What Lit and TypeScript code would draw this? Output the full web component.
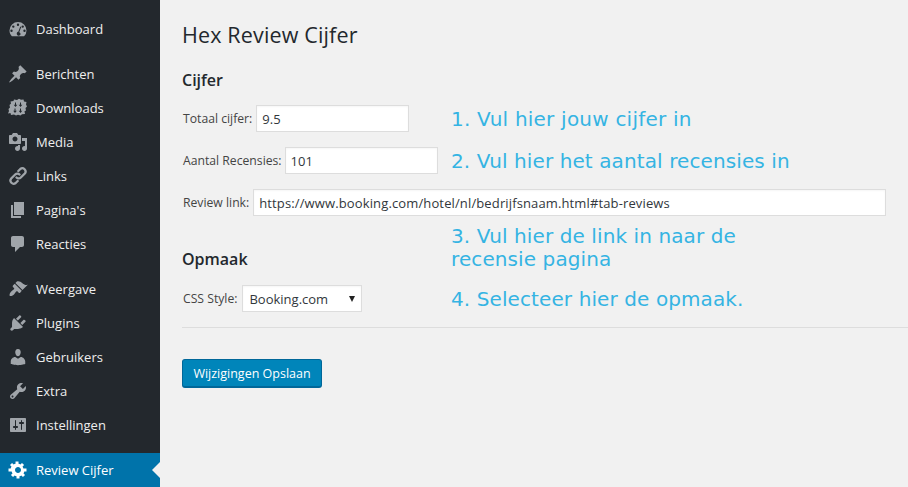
import { LitElement, html, css, svg } from "lit";
import { customElement } from "lit/decorators.js";

const icons: Record<string, unknown> = {
  dashboard: svg`<path fill-rule="evenodd" d="M10 3a8.500 8.500 0 0 0-8.500 8.500c0 2.300.9 4.300 2.400 5.800h12.200a8.300 8.300 0 0 0 2.400-5.800A8.500 8.500 0 0 0 10 3zM10 4.600a1.200 1.200 0 1 1 0 2.400 1.200 1.200 0 0 1 0-2.400zM5.300 6.400a1.200 1.200 0 1 1 0 2.400 1.200 1.200 0 0 1 0-2.400zM14.700 6.400a1.200 1.200 0 1 1 0 2.400 1.200 1.200 0 0 1 0-2.400zM3.500 10.500a1.200 1.200 0 1 1 0 2.400 1.200 1.200 0 0 1 0-2.400zM16.500 10.500a1.200 1.200 0 1 1 0 2.400 1.200 1.200 0 0 1 0-2.400zM12.300 7.500l.9.400-2 5.300a1.800 1.800 0 1 1-2.100 2.500 1.800 1.800 0 0 1 1.200-2.900z"/>`,
  pin: svg`<path d="M10.440 3.020l1.820-1.820 6.360 6.350-1.830 1.820c-1.050-.68-2.480-.57-3.410.36l-.75.75c-.92.93-1.040 2.350-.35 3.410l-1.830 1.820-2.410-2.410-2.800 2.790c-.42.42-3.380 2.710-3.800 2.290s1.860-3.390 2.280-3.810l2.790-2.790L4.100 9.360l1.830-1.820c1.050.69 2.480.57 3.400-.36l.75-.75c.93-.92 1.050-2.350.36-3.410z"/>`,
  downloads: svg`<path fill-rule="evenodd" d="M2.500 3.500l3-.5L6 1.500l3 .5 2-1.200 2 1 2.500-.3.500 2 2.500.5-.5 2.500 1 2-1.500 1.500.5 2.500-1.500.8.500 2.700-3 .3-1.500 1.200-2.500-.8-2 .8-2-1-3 .5-.5-2L0 15.500l1-2.500-.5-2L2 9.500 1.500 7 3 5.500zM7 4.500v2.300H5.700L7.500 9l1.800-2.200H8V4.500zM12 4.500v2.300h-1.300L12.500 9l1.800-2.200H13V4.500zM6.500 10.500v2.300H5.200L7 15l1.800-2.200H7.500v-2.300zM12 10.500v2.300h-1.300l1.800 2.200 1.800-2.200H13v-2.300z"/>`,
  media: svg`<path fill-rule="evenodd" d="M13 11V4c0-.55-.45-1-1-1h-1.670L9 1H5L3.670 3H2c-.55 0-1 .45-1 1v7c0 .55.45 1 1 1h10c.55 0 1-.45 1-1zM7 4.500c1.380 0 2.500 1.120 2.500 2.500S8.380 9.500 7 9.500 4.500 8.380 4.500 7 5.620 4.500 7 4.500zM14 6h5v10.500c0 1.380-1.120 2.500-2.500 2.500S14 17.880 14 16.500s1.120-2.500 2.500-2.500c.17 0 .34.020.5.050V9h-3V6zm-4 8.050V13h2v3.500c0 1.380-1.120 2.500-2.500 2.500S7 17.880 7 16.500 8.120 14 9.500 14c.17 0 .34.020.5.050z"/>`,
  link: svg`<path fill="none" stroke="currentColor" stroke-width="2.300" stroke-linecap="round" d="M8.500 11.500a3 3 0 0 0 4.300 0l4-4a3.200 3.200 0 0 0-4.500-4.500l-2 2M11.500 8.500a3 3 0 0 0-4.300 0l-4 4a3.200 3.200 0 0 0 4.500 4.500l2-2"/>`,
  page: svg`<path d="M6 15V2h10v13H6zm-1 1h8v2H3V5h2v11z"/>`,
  comment: svg`<path d="M5 2h9c1.100 0 2 .9 2 2v7c0 1.100-.9 2-2 2h-2l-5 5v-5H5c-1.100 0-2-.9-2-2V4c0-1.100.9-2 2-2z"/>`,
  brush: svg`<path d="M14.480 11.060L7.410 3.990l1.500-1.500c.5-.56 2.300-.47 3.510.32 1.210.8 1.430 1.280 2.910 2.100 1.180.64 2.450 1.260 4.450.85zm-.71.71L6.700 4.700 4.930 6.470c-.39.39-.39 1.020 0 1.410l1.060 1.060c.39.39.39 1.030 0 1.420-.6.6-1.430 1.110-2.210 1.690-.35.26-.7.53-1.010.84-1.430 1.430-1.400 3.600-1.030 3.970.37.37 2.540.4 3.970-1.030.31-.31.58-.66.84-1.010.58-.78 1.090-1.610 1.690-2.210.39-.39 1.030-.39 1.420 0l1.060 1.060c.39.39 1.020.39 1.410 0z"/>`,
  plugin: svg`<path d="M13.110 4.360L9.870 7.600 8 5.730l3.240-3.240c.35-.34 1.050-.2 1.560.32.520.510.660 1.210.310 1.550zm-8 1.770l.91-1.120 9.010 9.010-1.190.840c-.710.710-2.630 1.160-3.820 1.160H6.140L4.900 17.260c-.59.59-1.540.59-2.120 0-.59-.58-.59-1.530 0-2.120l1.240-1.240v-3.880c0-1.130.4-3.050 1.090-3.890zm7.260 3.970l3.240-3.240c.34-.35 1.040-.21 1.550.31.520.51.66 1.210.31 1.550l-3.240 3.250z"/>`,
  user: svg`<path d="M10 9.250c-2.270 0-2.730-3.440-2.730-3.440C7 4.020 7.820 2 9.970 2c2.160 0 2.980 2.020 2.710 3.810 0 0-.41 3.440-2.680 3.440zm0 2.570L12.720 10c2.390 0 4.520 2.330 4.520 4.530v2.490s-3.650 1.130-7.240 1.130c-3.650 0-7.240-1.130-7.240-1.130v-2.490c0-2.250 1.940-4.480 4.470-4.480z"/>`,
  wrench: svg`<path fill-rule="evenodd" d="M16.680 9.770c-1.340 1.340-3.300 1.670-4.950.99l-5.410 6.520c-.99.99-2.590.99-3.570 0-.99-.98-.99-2.580 0-3.570l6.520-5.420c-.68-1.650-.35-3.610.99-4.950 1.280-1.280 3.120-1.620 4.720-1.060l-2.890 2.890 2.820 2.820 2.860-2.870c.53 1.580.18 3.400-1.090 4.670zM3.810 16.210c.4.390 1.040.39 1.430 0 .4-.4.4-1.040 0-1.430-.39-.4-1.030-.4-1.430 0-.39.39-.39 1.030 0 1.430z"/>`,
  settings: svg`<path fill-rule="evenodd" d="M18 16V4c0-.55-.45-1-1-1H3c-.55 0-1 .45-1 1v12c0 .55.45 1 1 1h14c.55 0 1-.45 1-1zM8 11h1c.55 0 1 .45 1 1s-.45 1-1 1H8v1.500c0 .28-.22.5-.5.5s-.5-.22-.5-.5V13H6c-.55 0-1-.45-1-1s.45-1 1-1h1V5.500c0-.28.22-.5.5-.5s.5.22.5.5V11zm5-2h-1c-.55 0-1-.45-1-1s.45-1 1-1h1V5.500c0-.28.22-.5.5-.5s.5.22.5.5V7h1c.55 0 1 .45 1 1s-.45 1-1 1h-1v5.500c0 .28-.22.5-.5.5s-.5-.22-.5-.5V9z"/>`,
  gear: svg`<path fill-rule="evenodd" transform="translate(.5 -.5)" d="M18 12h-2.180c-.17.7-.44 1.350-.81 1.930l1.540 1.540-2.100 2.100-1.540-1.540c-.58.36-1.230.64-1.910.81V19H8v-2.180c-.68-.17-1.330-.45-1.910-.81l-1.540 1.540-2.120-2.120 1.540-1.540c-.36-.58-.64-1.230-.81-1.910H0V9.020h2.180c.17-.68.45-1.330.81-1.910L1.450 5.570l2.120-2.120 1.540 1.540c.58-.36 1.230-.64 1.910-.81V2h3v2.180c.68.17 1.330.45 1.910.81l1.540-1.540 2.120 2.120-1.540 1.540c.36.58.64 1.230.81 1.910H18V12zm-8.500 1.500c1.660 0 3-1.340 3-3s-1.340-3-3-3-3 1.340-3 3 1.340 3 3 3z"/>`,
};

type Item = { label: string; icon: string };
const top: Item[] = [{ label: "Dashboard", icon: "dashboard" }];
const content: Item[] = [
  { label: "Berichten", icon: "pin" },
  { label: "Downloads", icon: "downloads" },
  { label: "Media", icon: "media" },
  { label: "Links", icon: "link" },
  { label: "Pagina's", icon: "page" },
  { label: "Reacties", icon: "comment" },
];
const admin: Item[] = [
  { label: "Weergave", icon: "brush" },
  { label: "Plugins", icon: "plugin" },
  { label: "Gebruikers", icon: "user" },
  { label: "Extra", icon: "wrench" },
  { label: "Instellingen", icon: "settings" },
];

@customElement("app-root")
export class AppRoot extends LitElement {
  static styles = css`
    :host {
      display: block;
      width: 908px;
      height: 487px;
      overflow: hidden;
      font-family: "Open Sans", "Liberation Sans", sans-serif;
      font-size: 13px;
      color: #444;
    }
    .page { display: flex; height: 487px; background: #f1f1f1; position: relative; }
    .side {
      width: 160px;
      flex: none;
      background: #23282d;
      padding-top: 12px;
      display: flex;
      flex-direction: column;
      box-sizing: border-box;
    }
    .group { display: flex; flex-direction: column; margin-bottom: 11px; }
    .item {
      height: 34px;
      display: flex;
      align-items: center;
      color: #eee;
      font-size: 13px;
      padding-left: 8px;
      gap: 8px;
      position: relative;
    }
    .item svg { width: 20px; height: 20px; fill: currentColor; color: #a0a5aa; flex: none; }
    .item.active { background: #0073aa; color: #fff; }
    .item.active svg { color: #fff; }
    .item.active::after {
      content: "";
      position: absolute;
      right: 0;
      top: 9px;
      border: 8px solid transparent;
      border-right-color: #f1f1f1;
      border-left-width: 0;
    }
    .main { flex: 1; min-width: 0; padding: 21px 0 0 22px; position: relative; }
    h1 { margin: 0; font-size: 21.5px; font-weight: 400; line-height: 27px; color: #23282d; letter-spacing: 0.15px; }
    h2 { margin: 0; font-size: 16px; font-weight: 600; line-height: 20px; color: #23282d; }
    .h-cijfer { margin-top: 22px; }
    .h-opmaak { margin-top: 33px; }
    .row { display: flex; align-items: center; gap: 4px; font-size: 12.2px; margin-left: 1px; }
    .r1, .r3 { margin-top: 15px; }
    .r2 { margin-top: 15px; gap: 3px; }
    .r4 { margin-top: 16px; gap: 5px; }
    .field {
      box-sizing: border-box;
      height: 27px;
      background: #fff;
      border: 1px solid #ddd;
      box-shadow: inset 0 1px 2px rgba(0, 0, 0, 0.04);
      color: #32373c;
      font-size: 13px;
      padding: 0 5px;
      display: flex;
      align-items: center;
    }
    .short { width: 153px; }
    .long { width: 633px; font-size: 13px; letter-spacing: 0.13px; }
    .select { width: 120px; justify-content: space-between; padding: 0 6px 0 6px; }
    .caret {
      width: 0;
      height: 0;
      border-left: 3px solid transparent;
      border-right: 3px solid transparent;
      border-top: 6px solid #222;
    }
    hr { margin: 15px 0 0 0; border: 0; border-top: 1px solid #ddd; height: 0; }
    .btn {
      margin-top: 31px;
      box-sizing: border-box;
      width: 140px;
      height: 29px;
      background: #0085ba;
      border: 1px solid #006799;
      border-bottom-width: 2px;
      border-radius: 3px;
      color: #fff;
      font-size: 12.5px;
      display: flex;
      align-items: center;
      justify-content: center;
    }
    .note {
      position: absolute;
      left: 291px;
      margin: 0;
      font-family: "DejaVu Sans", Verdana, sans-serif;
      font-size: 20px;
      line-height: 23px;
      color: #35b4e3;
      white-space: nowrap;
      letter-spacing: 0.1px;
    }
    .n1 { top: 108px; letter-spacing: 0.22px; }
    .n2 { top: 150px; }
    .n3 { top: 225px; }
    .n4 { top: 288px; }
  `;

  private renderItem(i: Item, active = false) {
    return html`<div class="item ${active ? "active" : ""}">
      <svg viewBox="0 0 20 20" aria-hidden="true">${icons[i.icon]}</svg><span>${i.label}</span>
    </div>`;
  }

  render() {
    return html`<div class="page">
      <nav class="side">
        <div class="group">${top.map((i) => this.renderItem(i))}</div>
        <div class="group">${content.map((i) => this.renderItem(i))}</div>
        <div class="group">${admin.map((i) => this.renderItem(i))}</div>
        ${this.renderItem({ label: "Review Cijfer", icon: "gear" }, true)}
      </nav>
      <main class="main">
        <h1>Hex Review Cijfer</h1>
        <h2 class="h-cijfer">Cijfer</h2>
        <div class="row r1"><span>Totaal cijfer:</span><div class="field short">9.5</div></div>
        <div class="row r2"><span>Aantal Recensies:</span><div class="field short">101</div></div>
        <div class="row r3"><span>Review link:</span><div class="field long">https://www.booking.com/hotel/nl/bedrijfsnaam.html#tab-reviews</div></div>
        <h2 class="h-opmaak">Opmaak</h2>
        <div class="row r4"><span>CSS Style:</span><div class="field select"><span>Booking.com</span><i class="caret"></i></div></div>
        <hr />
        <div class="btn">Wijzigingen Opslaan</div>
        <p class="note n1">1. Vul hier jouw cijfer in</p>
        <p class="note n2">2. Vul hier het aantal recensies in</p>
        <p class="note n3">3. Vul hier de link in naar de<br />recensie pagina</p>
        <p class="note n4">4. Selecteer hier de opmaak.</p>
      </main>
    </div>`;
  }
}
